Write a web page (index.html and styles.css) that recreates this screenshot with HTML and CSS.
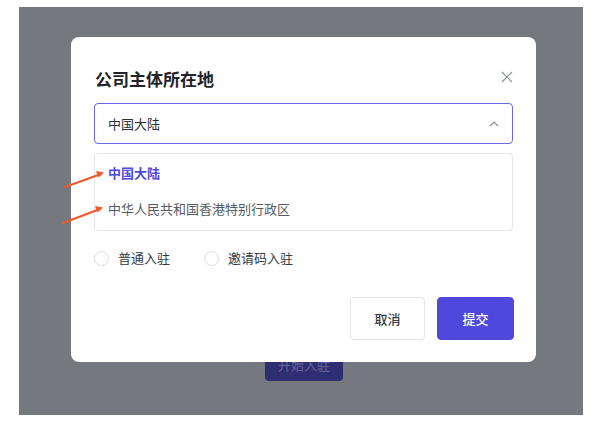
FILE: index.html
```html
<!DOCTYPE html>
<html lang="zh-CN">
<head>
    <meta charset="UTF-8">
    <meta name="viewport" content="width=device-width, initial-scale=1.0">
    <title>公司主体所在地</title>
    <link rel="stylesheet" href="styles.css">
</head>
<body>
    <div class="screen">
        <!-- page behind the mask -->
        <button class="start-btn">开始入驻</button>

        <!-- dialog -->
        <div class="modal">
            <div class="modal-header">
                <h2>公司主体所在地</h2>
                <svg class="close" width="12" height="12" viewBox="0 0 12 12">
                    <path d="M1 1L11 11M11 1L1 11" stroke="#8b8f99" stroke-width="1.2" fill="none"/>
                </svg>
            </div>

            <div class="select">
                <span>中国大陆</span>
                <svg width="10" height="6" viewBox="0 0 10 6">
                    <path d="M1 5L5 1L9 5" stroke="#8b8f99" stroke-width="1.2" fill="none"/>
                </svg>
            </div>

            <ul class="options">
                <li class="active">中国大陆</li>
                <li>中华人民共和国香港特别行政区</li>
            </ul>

            <div class="radios">
                <label class="radio"><span class="dot"></span>普通入驻</label>
                <label class="radio"><span class="dot"></span>邀请码入驻</label>
            </div>

            <div class="modal-footer">
                <button class="btn">取消</button>
                <button class="btn primary">提交</button>
            </div>
        </div>
    </div>

    <!-- annotation arrows -->
    <svg class="marks" width="602" height="423" viewBox="0 0 602 423">
        <g stroke="#f0572a" stroke-width="2" fill="none" stroke-linecap="round">
            <path d="M65 187L101 174"/>
            <path d="M63 223L100 209"/>
        </g>
        <g fill="#f0572a">
            <path d="M104 172.5L96 171L98.5 177.5Z"/>
            <path d="M103 207.5L95 206L97.5 212.5Z"/>
        </g>
    </svg>
</body>
</html>
```

FILE: styles.css
```css
body {
    margin: 0;
    background: #fff;
    font-family: "Noto Sans CJK SC", "Noto Sans", sans-serif;
    width: 602px;
    height: 423px;
    position: relative;
}
.screen {
    position: relative;
    margin: 7px 0 0 19px;
    width: 564px;
    height: 408px;
    background: #76787f;
    padding-top: 340px;
    box-sizing: border-box;
}
.start-btn {
    margin-left: 246px;
    width: 78px;
    height: 34px;
    border: none;
    border-radius: 4px;
    background: #2f2e72;
    color: #67679a;
    font-family: inherit;
    font-size: 13px;
    padding: 0;
}
.modal {
    position: absolute;
    top: 30px;
    left: 52px;
    width: 465px;
    box-sizing: border-box;
    padding: 30px 22px 22px 23px;
    background: #fff;
    border-radius: 8px;
}
.modal-header {
    display: flex;
    justify-content: space-between;
    align-items: flex-start;
    height: 25px;
}
.modal-header h2 {
    margin: 0 0 0 1px;
    font-size: 17px;
    line-height: 24px;
    font-weight: 600;
    color: #1f232b;
}
.close {
    margin: 4px 1px 0 0;
}
.select {
    margin: 11px 1px 0 0;
    height: 41px;
    box-sizing: border-box;
    border: 1px solid #6e66e4;
    border-radius: 4px;
    display: flex;
    align-items: center;
    justify-content: space-between;
    padding: 0 13px 0 13px;
    font-size: 13px;
    color: #2a2f38;
}
.options {
    list-style: none;
    margin: 9px 1px 0 0;
    padding: 0;
    height: 78px;
    box-sizing: border-box;
    border: 1px solid #e3e6ef;
    border-radius: 4px;
}
.options li {
    height: 37px;
    line-height: 37px;
    padding-left: 13px;
    font-size: 13px;
    color: #555b66;
}
.options li.active {
    margin-bottom: -1px;
    color: #5048e2;
    font-weight: 700;
}
.radios {
    margin-top: 17px;
    height: 20px;
    display: flex;
    align-items: center;
    gap: 34px;
}
.radio {
    display: flex;
    align-items: center;
    gap: 9px;
    font-size: 13px;
    line-height: 18px;
    color: #333a44;
}
.dot {
    width: 15px;
    height: 15px;
    box-sizing: border-box;
    border: 1px solid #d9dce5;
    border-radius: 50%;
}
.modal-footer {
    margin-top: 29px;
    display: flex;
    justify-content: flex-end;
    gap: 12px;
}
.btn {
    width: 75px;
    height: 43px;
    border: 1px solid #e0e3ee;
    border-radius: 4px;
    background: #fff;
    color: #333a44;
    font-family: inherit;
    font-size: 13px;
    font-weight: 500;
    padding: 0;
}
.btn.primary {
    width: 77px;
    border-color: #4f48dc;
    background: #4f48dc;
    color: #fff;
}
.marks {
    position: absolute;
    top: 0;
    left: 0;
    pointer-events: none;
}
```
